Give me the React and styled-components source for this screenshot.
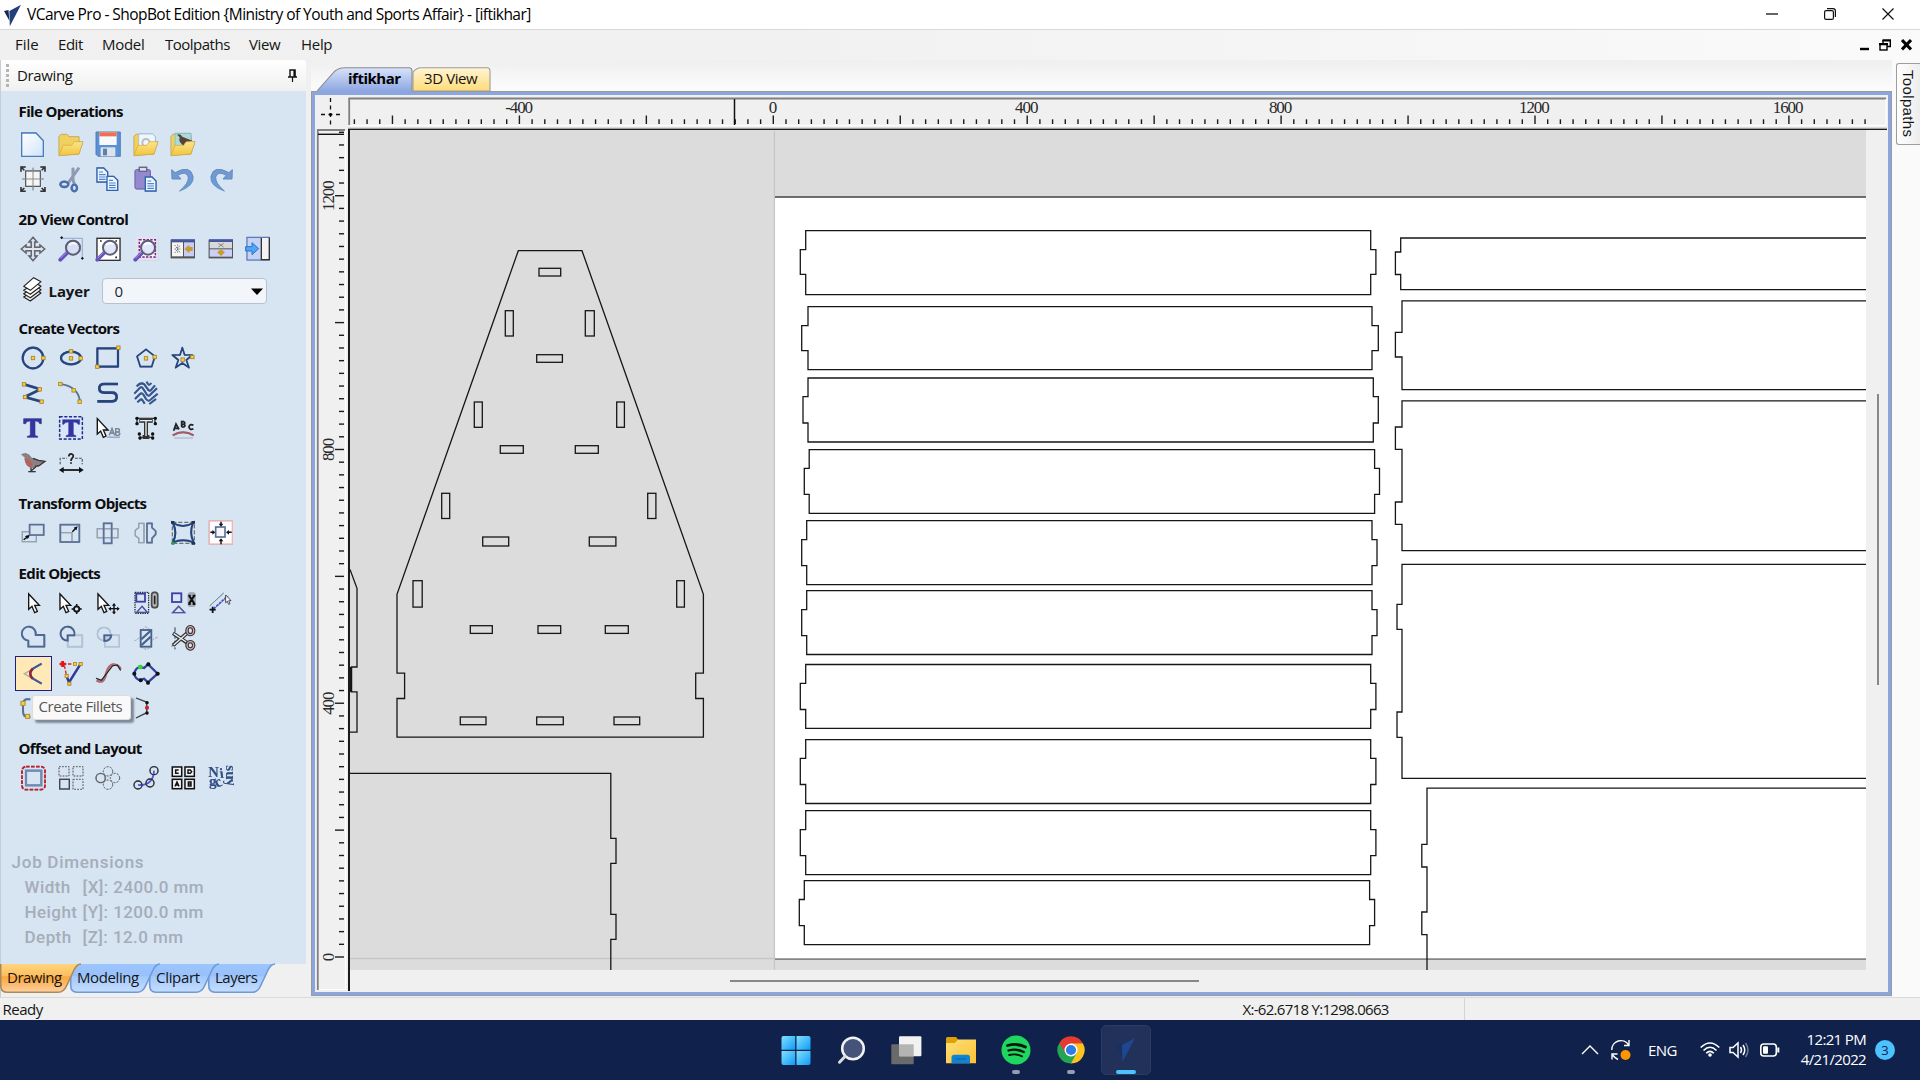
import React from 'react';
import styled, { createGlobalStyle } from 'styled-components';

const ui = '"Open Sans", "Noto Sans", sans-serif';

const Global = createGlobalStyle`
  * { box-sizing: border-box; }
  html, body { margin: 0; padding: 0; }
  body { width: 1920px; height: 1080px; overflow: hidden; font-family: ${ui}; color: #111; }
  svg { display: block; }
`;

const Desktop = styled.div`
  width: 1920px; height: 1080px; display: flex; flex-direction: column; background: #f0f0f0;
`;
const Text = styled.span`
  font-family: ${ui};
  font-size: ${p => p.$size || 15}px;
  font-weight: ${p => p.$weight || 400};
  letter-spacing: ${p => p.$ls || 0}px;
  color: ${p => p.$color || '#151515'};
  white-space: pre;
  line-height: 1;
`;

/* ---------- window chrome ---------- */
const TitleBar = styled.header`
  height: 30px; background: #fff; border-bottom: 1px solid #d9d9d9;
  display: flex; align-items: center; padding: 0 26px 0 4px;
`;
const AppLogo = styled.svg`width: 17px; height: 24px; margin-right: 6px;`;
const Spacer = styled.div`flex: 1;`;
const WindowButtons = styled.div`display: flex; gap: 46px; align-items: center; padding-bottom: 1px;`;
const MenuBar = styled.nav`
  height: 30px; display: flex; align-items: center; padding: 0 8px 1px 15px;
  background: linear-gradient(90deg, #f0f0f0, #f1f1f1 40%, #fafafa);
`;
const MenuItem = styled(Text)`width: ${p => p.$w}px;`;
const MdiButtons = styled.div`display: flex; gap: 10px; align-items: center;`;

const Body = styled.main`height: 937px; display: flex; border-left: 1px solid #c3ced9;`;

/* ---------- left panel ---------- */
const Side = styled.aside`width: 305px; display: flex; flex-direction: column;`;
const PanelHeader = styled.div`
  height: 31px; display: flex; align-items: center; padding: 0 9px 0 5px;
  background: linear-gradient(#fff, #f0f0f0); border-radius: 0 3px 0 0;
`;
const Pin = styled.svg`width: 9px; height: 13px; margin-bottom: 1px;`;
const Grip = styled.div`
  width: 3px; height: 24px; margin-right: 8px;
  background: repeating-linear-gradient(#b5b5b5 0 3px, transparent 3px 5px);
`;
const ToolPanel = styled.div`
  height: 873px; background: #d7e4f2; display: flex; flex-direction: column; padding-left: 13.6px;
`;
const Section = styled.section`margin-top: ${p => p.$top}px;`;
const Heading = styled.h3`
  margin: 0 0 ${p => p.$gap || 1.5}px 4px; height: 20px; line-height: 18px;
  font-size: 15px; font-weight: 700; letter-spacing: -0.66px; color: #0c0c0c; white-space: nowrap;
`;
const ToolRow = styled.div`display: flex; height: 35px; position: relative;`;
const Tool = styled.button`
  width: 37.5px; height: 35px; padding: 0; display: flex; align-items: center; justify-content: center;
  background: ${p => (p.$on ? '#ffe9b6' : 'transparent')};
  border: ${p => (p.$on ? '1.4px solid #1d1d8c' : '0')};
`;
const Glyph = styled.svg`
  width: 26px; height: 26px; overflow: visible; flex: none;
  filter: drop-shadow(.7px .9px .7px rgba(60, 80, 110, .4));
`;
const LayerRow = styled.div`margin-top: 11.5px; height: 26px; display: flex; align-items: center;`;
const LayerIcon = styled.svg`width: 26px; height: 26px; margin: -4px 0 0 5px; overflow: visible;`;
const LayerName = styled(Text)`width: 53px; margin-left: 3px;`;
const Select = styled.div`
  width: 165px; height: 26px; border: 1px solid #b7c2ce; border-radius: 4px; background: #f2f6fb;
  display: flex; align-items: center; justify-content: space-between; padding: 0 3px 0 12px;
`;
const Tooltip = styled.div`
  position: absolute; left: 17px; top: 4px; width: 99px; height: 25px; border-radius: 3px;
  border: 1px solid #dcdcdc; background: #f9f9f9; box-shadow: 3px 3px 2px rgba(70, 80, 95, .6);
  display: flex; align-items: center; padding: 0 0 1px 6px;
`;
const JobInfo = styled.div`
  margin-top: auto; padding: 0 0 14px; display: flex; flex-direction: column; margin-left: -3px;
`;
const JobLine = styled.div`
  padding-left: ${p => (p.$in ? 13 : 0)}px; height: 25px;
  font: 500 17px/25px Roboto, sans-serif; letter-spacing: ${p => p.$ls}px; color: #a4adb8; white-space: pre;
`;
const JobKey = styled.span`display: inline-block; width: 58px;`;
const BottomTabs = styled.div`display: flex; height: 33px; margin-left: -1px;`;
const BottomTab = styled.div`
  position: relative; z-index: ${p => p.$z}; width: ${p => p.$w}px; height: 29px;
  padding: 6px 0 0 7px; display: flex; align-items: flex-start;
`;
const TabShape = styled.svg`
  position: absolute; left: 0; top: 0; z-index: -1; overflow: visible; width: 100%; height: 29px;
`;

/* ---------- document area ---------- */
const Docs = styled.section`width: 1581px; margin-left: 5px; display: flex; flex-direction: column;`;
const DocTabs = styled.div`
  height: 31px; display: flex; align-items: flex-end; padding-left: 6px;
  background: linear-gradient(#efefef, #fcfcfc);
`;
const DocTab = styled.div`
  position: relative; z-index: 0; width: ${p => p.$w}px; height: 24px;
  padding: 4px 0 0 ${p => p.$pl}px; display: flex; align-items: flex-start;
`;
const Frame = styled.div`
  height: 905px; border: 4px solid #8aa5e0; outline: 1px solid #9a9a9a; outline-offset: -1px;
  background: #f0f0f0; display: grid; padding: 1px 0 0;
  grid-template-columns: 33px 1539px; grid-template-rows: 33px 862px;
`;
const Pane = styled.svg`width: ${p => p.$w}px; height: ${p => p.$h}px;`;
const CanvasWrap = styled.div`
  border-left: 2px solid #1a1a1a; border-top: 1.5px solid #1a1a1a;
  display: grid; grid-template-columns: 1516px 21px; grid-template-rows: 840px 20px;
`;
const ScrollY = styled.div`
  padding-left: 10.5px; padding-top: 264px;
  &::after { content: ''; display: block; width: 2px; height: 291px; background: #888; }
`;
const ScrollX = styled.div`
  grid-column: 1 / 3; padding: 10px 0 0 380px;
  &::after { content: ''; display: block; width: 469px; height: 2px; background: #888; }
`;

const RightDock = styled.aside`flex: 1; background: #fafafa; padding: 3px 0 0 4px;`;
const DockTab = styled.div`
  width: 24px; height: 82px; border: 1px solid #9d9d9d; border-right: 0; border-radius: 3px 0 0 3px;
  background: linear-gradient(90deg, #fff, #ededed);
  writing-mode: vertical-rl; display: flex; align-items: center; padding: 6px 1px 0 0;
`;
const DockLabel = styled(Text)`font-family: "Liberation Sans", Arial, sans-serif;`;

const StatusBar = styled.footer`
  height: 23px; border-top: 1px solid #dadada; background: #f0f0f0; display: flex; align-items: center; padding-left: 2.5px;
`;
const StatusReady = styled(Text)`width: 1240px;`;
const Coords = styled.div`
  width: 222px; height: 22px; display: flex; align-items: center; border-right: 1px solid #d4d4d4;
`;

/* ---------- taskbar ---------- */
const Taskbar = styled.div`
  height: 60px; background: #10224c; display: flex; align-items: center;
`;
const Apps = styled.div`display: flex; gap: 5px; margin-left: 771px;`;
const AppButton = styled.div`
  width: 50px; height: 50px; border-radius: 5px; display: flex; flex-direction: column; align-items: center;
  justify-content: flex-end;
  background: ${p => (p.$active ? '#21315a' : 'transparent')};
  border: 1px solid ${p => (p.$active ? '#2b3b62' : 'transparent')};
`;
const AppIcon = styled.svg`width: 32px; height: 32px; overflow: visible; margin-bottom: -1.5px;`;
const Running = styled.i`
  width: ${p => p.$w}px; height: 4px; border-radius: 2px; background: ${p => p.$c};
`;
const Tray = styled.div`margin-left: auto; display: flex; align-items: center; padding-right: 25px; height: 60px;`;
const TrayIcon = styled.svg`width: ${p => p.$w}px; height: 24px; margin-right: ${p => p.$mr}px; overflow: visible;`;
const Clock = styled.div`display: flex; flex-direction: column; align-items: flex-end; gap: 5px; width: 80px; margin-right: 9px; padding-bottom: 1.5px;`;
const Lang = styled(Text)`width: 52px;`;
const Badge = styled.div`
  width: 20px; height: 20px; border-radius: 50%; background: #4cc2ff; display: flex; align-items: center; justify-content: center;
`;

/* ---------- toolbar drawings: origin is the centre of a 78-unit square ---------- */
const B = '#26457f';
const Node = ({ x, y, r = 5 }) => (
  <rect x={x - r} y={y - r} width={r * 2} height={r * 2} fill="#f6cf45" stroke="#b58a1c" strokeWidth="2.4" />
);
const Dot = ({ x, y, c = '#111', r = 5 }) => <circle cx={x} cy={y} r={r} fill={c} />;
const Arrow = ({ x = 0, y = 0, s = 1 }) => (
  <path transform={`translate(${x} ${y}) scale(${s})`} d="M0 0V46L10 37L18 56L26 52L18 34H32Z" fill="#fff" stroke="#161616" strokeWidth="4" />
);
const Lens = () => (
  <g>
    <path d="M-8 8L-32 32" stroke="#6a4fc0" strokeWidth="11" strokeLinecap="round" />
    <path d="M-10 6L-32 28" stroke="#a99ae6" strokeWidth="3" />
    <circle cx="6" cy="-4" r="21" fill="#dfe6fa" fillOpacity=".9" stroke="#5d5d78" strokeWidth="6" />
    <path d="M-6 -12Q4 -22 16 -14" stroke="#fff" strokeWidth="5" fill="none" />
  </g>
);
const Folder = ({ children }) => (
  <g>
    <path d="M-36 32V-22L-30 -29H-12L-6 -22H24V30Z" fill="#f0d05e" stroke="#cda83f" strokeWidth="2" />
    {children}
    <path d="M-36 35L-24 4H2L10 -7H36L24 30Z" fill="url(#gold)" stroke="#d6a632" strokeWidth="2" />
  </g>
);
const Doc = ({ x, y }) => (
  <g transform={`translate(${x} ${y})`}>
    <path d="M0 0H20L32 12V42H0Z" fill="#eef5ff" stroke="#2f62ac" strokeWidth="4" />
    <path d="M6 12H18M6 20H26M6 27H26M6 34H26" stroke="#4c86d0" strokeWidth="3.4" />
  </g>
);
const N = { fill: 'none', stroke: B, strokeWidth: 6.5, strokeLinejoin: 'round' };

const icons = {
  newFile: <path d="M-34 -33H9L31 -10V37H-34Z" fill="url(#page)" stroke="#4a7cc0" strokeWidth="4" />,
  open: <Folder />,
  save: (
    <g>
      <path d="M-36 -36H37V37H-30L-36 31Z" fill="#5b90d4" stroke="#4474b5" strokeWidth="2" />
      <rect x="-26" y="-35" width="52" height="38" fill="#f6f8fb" />
      <rect x="-26" y="-35" width="52" height="12" fill="#ee6f55" />
      <rect x="-22" y="10" width="44" height="27" fill="#dbe3ec" />
      <rect x="-15" y="14" width="12" height="20" fill="#5f7fa5" />
    </g>
  ),
  importV: <Folder><path d="M-22 -30H20L28 -22V14H-22Z" fill="#eef6ff" stroke="#8fb4d6" strokeWidth="2" /><circle cx="0" cy="-4" r="11" fill="none" stroke="#bdbdbd" strokeWidth="6" /></Folder>,
  importB: <Folder><path d="M-24 -32H24V10H-24Z" fill="#a9dcd8" stroke="#7fb5b5" strokeWidth="2" /><path d="M-18 -28Q-8 -32 -2 -22L28 -10L6 -4L2 8L-4 0Q-14 -8 -10 -20Z" fill="#5b4238" /></Folder>,
  job: (
    <g fill="none" stroke="#333">
      <rect x="-22" y="-24" width="44" height="46" fill="#f5f5f5" stroke="#555" strokeWidth="3.6" />
      <path d="M0 -34V34M-32 0H32" stroke="#8b8b8b" strokeWidth="3" />
      <path d="M-36 -22V-36H-22M-36 -36L-26 -26M22 -36H36V-22M36 -36L26 -26M36 24V37H22M36 37L26 27M-22 37H-36V24M-36 37L-26 27" strokeWidth="4.4" />
    </g>
  ),
  cut: (
    <g fill="none">
      <path d="M24 -34L-10 14M6 -34L6 4L10 14" stroke="#8f99b3" strokeWidth="8" />
      <ellipse cx="-20" cy="16" rx="12" ry="8" stroke="#4b6fae" strokeWidth="7" />
      <ellipse cx="10" cy="27" rx="8" ry="10" stroke="#4b6fae" strokeWidth="7" />
    </g>
  ),
  copy: <g><Doc x={-33} y={-33} /><Doc x={-3} y={-8} /></g>,
  paste: <g><rect x="-33" y="-28" width="46" height="58" rx="5" fill="#9488cf" stroke="#6c62ad" strokeWidth="3" /><rect x="-20" y="-35" width="22" height="12" fill="#dcdcea" stroke="#66668c" strokeWidth="4" /><Doc x={-2} y={-6} /></g>,
  undo: <path d="M-34 -28L-33 0H-6L-16 -11Q10 -26 16 -6Q18 12 -10 36Q34 20 30 -8Q22 -44 -24 -19Z" fill="url(#curl)" stroke="#5b82bc" strokeWidth="2" />,
  redo: <path d="M34 -28L33 0H6L16 -11Q-10 -26 -16 -6Q-18 12 10 36Q-34 20 -30 -8Q-22 -44 24 -19Z" fill="url(#curl)" stroke="#5b82bc" strokeWidth="2" />,

  pan: <path d="M0 -35L12 -21H5V-5H21V-12L35 0L21 12V5H5V21H12L0 35L-12 21H-5V5H-21V12L-35 0L-21 -12V-5H-5V-21H-12Z" fill="#e4e4ec" stroke="#666673" strokeWidth="4.4" />,
  zoom: <g><path d="M-28 -32H34V26" fill="none" stroke="#8ea6d6" strokeWidth="2" /><path d="M-32 -34h8M-28 -38v8M30 28h8M34 24v8" stroke="#111" strokeWidth="3" /><Lens /></g>,
  zoomFit: <g><rect x="-33" y="-32" width="69" height="66" fill="#fff" stroke="#333" strokeWidth="4" /><path d="M-24 -24h5M22 -24h5M22 25h5" stroke="#222" strokeWidth="5" /><Lens /></g>,
  zoomSel: <g><rect x="-33" y="-36" width="70" height="70" fill="#eef0f8" opacity=".8" /><rect x="-20" y="-28" width="48" height="52" fill="#fbf7fd" stroke="#8b178b" strokeWidth="4.5" strokeDasharray="7 4" /><Lens /></g>,
  tileH: <g><rect x="-37" y="-28" width="73" height="56" fill="#555" /><path d="M-36 -26H36" stroke="#3f58bd" strokeWidth="6" /><rect x="-33" y="-20" width="33" height="42" fill="#f5f5f5" /><rect x="3" y="-20" width="30" height="42" fill="#c7cdf8" /><path d="M4 0L19 -13V-6H29V6H19V13Z" fill="#c79c2a" /><path d="M-25 -12L-8 12M-25 12L-8 -12M-25 0H-8M-16 -14V14" stroke="#777" strokeWidth="3" strokeDasharray="4 3" /></g>,
  tileV: <g><rect x="-37" y="-28" width="73" height="56" fill="#555" /><path d="M-36 -26H36" stroke="#3f58bd" strokeWidth="6" /><rect x="-34" y="-21" width="67" height="19" fill="#d9d9d9" /><rect x="-34" y="1" width="67" height="22" fill="#cbd0f8" /><path d="M-12 10L0 21L12 10L0 1Z" fill="#c79c2a" /><path d="M-8 -17L8 -6M-8 -6L8 -17" stroke="#888" strokeWidth="3" /></g>,
  dock: <g><rect x="-33" y="-35" width="67" height="68" fill="#c4d2f5" stroke="#4b6eb0" strokeWidth="3" /><rect x="12" y="-33" width="20" height="63" fill="#f3f3f3" /><path d="M10 -33V32H34V-34" stroke="#333" strokeWidth="4" fill="none" /><path d="M-37 -7H-18V-19L2 -1L-18 17V6H-37Z" fill="#4fa6f5" stroke="#2a74c8" strokeWidth="3" /></g>,

  circle: <g><circle r="31" {...N} /><Node x={0} y={0} /><Node x={31} y={0} /></g>,
  ellipse: <g><ellipse rx="30" ry="19" {...N} /><Node x={0} y={-20} /><Node x={0} y={1} /><Node x={29} y={1} /></g>,
  rect: <g><rect x="-32" y="-29" width="62" height="55" {...N} /><Node x={31} y={-31} /><Node x={-32} y={26} /></g>,
  poly: <g><path d="M0 -26L27 -5L17 26H-17L-27 -5Z" {...N} strokeWidth="5" /><Node x={0} y={1} /><Node x={26} y={-3} /></g>,
  star: <g><path d="M-2 -31L5 -9H28L10 6L18 29L-2 15L-22 29L-14 6L-32 -9H-9Z" {...N} strokeWidth="5" /><Node x={-1} y={5} /><Node x={28} y={-3} /></g>,
  polyline: <g><path d="M-27 -26L22 -11L-25 12L27 26" {...N} strokeWidth="8" /><Node x={-27} y={-26} /><Node x={20} y={-11} /><Node x={-24} y={12} /><Node x={26} y={26} /></g>,
  arc: <g><path d="M-32 -27Q22 -20 27 26" {...N} stroke="#5c7396" strokeWidth="5" /><Node x={-32} y={-27} /><Node x={8} y={-8} /><Node x={26} y={26} /></g>,
  curve: <path d="M30 -27H-12Q-26 -27 -26 -14Q-26 -1 -12 -1H12Q26 -1 26 12Q26 25 12 25H-32" {...N} strokeWidth="8" />,
  texture: (
    <g {...N} strokeWidth="6" stroke="#36558f">
      <path d="M-35 2L-20 -14Q-13 -21 -8 -12L2 4Q8 12 14 4L33 -14M-33 18L-18 3Q-12 -2 -7 6L0 18Q8 28 16 18L35 2M-26 28L-17 20Q-13 17 -9 24L-4 32M-28 -20Q-16 -34 -5 -26L8 -8Q12 -4 16 -10L27 -23M2 -34Q8 -18 16 -30M10 33L30 18" />
    </g>
  ),
  text: <path d="M-28 -28H25V-13H20Q18 -22 6 -21V20Q6 24 14 25V28H-17V25Q-8 24 -8 20V-21Q-20 -22 -22 -13H-28Z" fill="#3535a0" stroke="#3535a0" strokeWidth="1.5" />,
  textBox: <g><rect x="-34" y="-34" width="68" height="67" fill="#dce6fb" stroke="#1f2f8c" strokeWidth="4.4" strokeDasharray="9 5" /><path d="M-25 -25H26V-11H21Q18 -18 7 -18V18Q7 22 15 23V26H-15V23Q-7 22 -7 18V-18Q-18 -18 -21 -11H-25Z" fill="#3535a0" stroke="#3535a0" strokeWidth="1.5" /></g>,
  textEdit: <g><Arrow x={-32} y={-28} /><g fill="none" stroke="#7d8797" strokeWidth="4"><path d="M4 22L12 2L20 22M7 15H17M23 22V2H31Q38 6 31 12H23M31 12Q40 18 31 22H23" /></g><path d="M-2 28H36" stroke="#9aaccb" strokeWidth="4" /></g>,
  textNode: <g><path d="M-27 -29H27M-27 -29V-14M27 -29V-14M-18 28H18" stroke="#444" strokeWidth="4" fill="none" /><path d="M-20 -22H20M0 -22V24M-10 27H10" stroke="#333" strokeWidth="12" /><path d="M-18 -22H18M0 -22V24" stroke="#eee" strokeWidth="4" /><Dot x={-27} y={-29} /><Dot x={28} y={-29} /><Dot x={-27} y={-13} /><Dot x={28} y={-13} /><Dot x={-18} y={30} /><Dot x={20} y={30} /><Dot x={-20} y={18} /><Dot x={20} y={18} /></g>,
  textArc: <g><g fill="none" stroke="#222" strokeWidth="5"><path d="M-28 8L-21 -12L-12 4M-26 1H-15M-4 -3V-19H2Q9 -15 2 -11H-4M2 -11Q10 -7 2 -3H-4M31 -8Q20 -14 18 -3Q20 8 31 2" /></g><path d="M-31 22Q0 4 32 22" fill="none" stroke="#a65a64" strokeWidth="6" /><path d="M-26 30H30" stroke="#c3c9d4" strokeWidth="3" /></g>,
  bird: <g><path d="M-36 -26L-22 -30Q-10 -26 -4 -16L36 -4L18 10Q2 18 -8 14Q-26 6 -24 -16Z" fill="#8d8080" /><path d="M-26 -14Q-22 10 -6 13Q2 4 -10 -10Z" fill="#b9605a" /><path d="M-6 14L-6 26M-14 26H8M8 12L-6 24M0 -14L16 -8L36 -5L18 8L6 10" stroke="#3e3435" strokeWidth="3.6" fill="none" /></g>,
  measure: <g fill="none"><path d="M-32 4V-14H-12M12 -14H34V4" stroke="#777" strokeWidth="4" strokeDasharray="8 4" /><path d="M-7 -20Q-5 -28 2 -27Q11 -23 4 -15Q0 -12 0 -6M0 -2V2" stroke="#222" strokeWidth="5" /><path d="M-26 21H28" stroke="#111" strokeWidth="5" /><path d="M-36 21L-22 12V30ZM38 21L24 12V30Z" fill="#111" /></g>,

  move: <g fill="none"><rect x="-32" y="-4" width="42" height="30" stroke="#98a2af" strokeWidth="3.6" /><rect x="-10" y="-25" width="42" height="31" stroke="#5b7096" strokeWidth="5" fill="#d7e2f0" /><path d="M-28 20L-12 8" stroke="#111" strokeWidth="4" /><path d="M-12 8L-22 10L-16 16Z" fill="#111" stroke="#111" strokeWidth="3" /></g>,
  size: <g fill="none"><path d="M-32 -1H3V25" stroke="#98a2af" strokeWidth="3.6" /><rect x="-32" y="-25" width="57" height="52" stroke="#5b7096" strokeWidth="5" /><path d="M4 -4L16 -16" stroke="#111" strokeWidth="4" /><path d="M20 -20L8 -16L16 -8Z" fill="#111" /></g>,
  rotate: <g fill="none"><rect x="-32" y="-13" width="62" height="27" stroke="#98a2af" strokeWidth="4" /><rect x="-13" y="-29" width="24" height="60" stroke="#5b7096" strokeWidth="5" /></g>,
  mirror: <g fill="none" strokeLinejoin="round"><path d="M-6 -29V29H-22V16L-32 8V-8L-22 -16V-29Z" stroke="#98a2af" strokeWidth="4" /><path d="M3 -29V29H18V16L29 4V-6L18 -16V-29Z" stroke="#5b7096" strokeWidth="5" /></g>,
  distort: <g fill="none"><rect x="-32" y="-32" width="66" height="63" stroke="#666" strokeWidth="3" strokeDasharray="12 6" /><path d="M-30 -30Q0 -12 30 -30Q18 0 32 28Q0 16 -30 28Q-16 0 -30 -30Z" stroke="#23477d" strokeWidth="6" /><path d="M-36 -32h10M26 -32h10M26 31h10" stroke="#23344a" strokeWidth="8" /><Dot x={-30} y={31} c="#2aa043" /></g>,
  align: <g fill="none"><rect x="-35" y="-36" width="69" height="69" fill="#fff" stroke="#f3b5b5" strokeWidth="4" /><rect x="-16" y="-18" width="28" height="30" stroke="#5b7096" strokeWidth="5" fill="#f5f7fb" /><path d="M0 -34V-24M0 34V22M-32 -2H-22M32 -2H20" stroke="#111" strokeWidth="4.4" /><path d="M-7 -28L0 -19L7 -28ZM-7 25L0 16L7 25ZM-26 -9L-17 -2L-26 5ZM24 -9L15 -2L24 5Z" fill="#111" /></g>,

  select: <Arrow x={-13} y={-27} />,
  nodeEdit: <g><Arrow x={-33} y={-27} /><circle cx="17" cy="18" r="8" fill="none" stroke="#111" strokeWidth="5" /><path d="M17 3V12M17 24V33M2 18H11M23 18H32" stroke="#111" strokeWidth="4.4" /></g>,
  transform: <g><Arrow x={-30} y={-27} /><path d="M18 3V31M4 17H32" stroke="#111" strokeWidth="4" /><path d="M12 8L18 0L24 8ZM12 26L18 34L24 26ZM9 11L1 17L9 23ZM27 11L35 17L27 23Z" fill="#111" /></g>,
  group: <g fill="none"><rect x="-33" y="-32" width="41" height="63" stroke="#111" strokeWidth="3" strokeDasharray="4 3" /><rect x="-29" y="-28" width="26" height="24" stroke="#3d3da8" strokeWidth="5" /><path d="M-12 10L-28 28H4Z" stroke="#5050a8" strokeWidth="4" /><rect x="17" y="-32" width="18" height="46" rx="8" stroke="#4b4b4b" strokeWidth="5" fill="#bbb" /><path d="M26 -22V4" stroke="#222" strokeWidth="5" /></g>,
  ungroup: <g fill="none"><rect x="-33" y="-29" width="28" height="26" stroke="#3d3da8" strokeWidth="5" /><path d="M-13 10L-31 29H5Z" stroke="#5050a8" strokeWidth="4" /><rect x="14" y="-32" width="24" height="44" rx="9" fill="#a3adb6" /><path d="M18 -22L34 2M34 -22L18 2M16 -22H23M29 -22H37M16 3H23M29 3H37" stroke="#111" strokeWidth="6" /></g>,
  measureEdit: <g fill="none"><path d="M-34 9L8 -30M-24 20L22 -20" stroke="#7d8797" strokeWidth="3" /><path d="M-22 17L18 -20" stroke="#3b49e0" strokeWidth="4" strokeDasharray="7 4" /><path d="M-34 20H-16M-25 11V30" stroke="#111" strokeWidth="5" /><Arrow x={14} y={-24} s={0.5} /></g>,
  weld: <path d="M-14 8A21 21 0 1 1 8 -9H34V26H-14Z" {...N} stroke="#4f6793" strokeWidth="5.5" />,
  subtract: <g fill="none"><rect x="-10" y="-8" width="44" height="34" stroke="#b4c2d6" strokeWidth="4.5" /><path d="M-10 8A21 21 0 1 1 10 -8H-10Z" stroke="#47628f" strokeWidth="5.5" /></g>,
  overlap: <g fill="none"><rect x="-10" y="-8" width="44" height="34" stroke="#b4c2d6" strokeWidth="4" /><circle cx="-12" cy="-12" r="20" stroke="#b4c2d6" strokeWidth="4" /><path d="M-11 -8H10Q8 8 -11 9Z" stroke="#47628f" strokeWidth="5.5" fill="#c3cfdf" /></g>,
  slice: <g fill="none"><path d="M-34 8Q-26 6 -20 -2M34 -2Q22 2 16 10M-10 -26L-2 -34L14 -24M-14 28L0 34L16 28" stroke="#a7b3c5" strokeWidth="3" strokeDasharray="6 4" /><rect x="-16" y="-24" width="32" height="50" stroke="#47628f" strokeWidth="5" /><path d="M-14 4L14 -22M-14 22L14 -4" stroke="#47628f" strokeWidth="6" /></g>,
  trim: <g fill="none"><path d="M-24 -32V34M-34 24L-20 20" stroke="#4b5a6d" strokeWidth="3" strokeDasharray="14 6" /><path d="M-30 -14L12 14M-30 22L14 -16" stroke="#333" strokeWidth="11" /><path d="M-28 -13L10 12M-28 21L12 -14" stroke="#eee" strokeWidth="4" /><ellipse cx="22" cy="-22" rx="10" ry="12" stroke="#333" strokeWidth="10" /><ellipse cx="22" cy="-22" rx="10" ry="12" stroke="#d8a9ad" strokeWidth="4" /><ellipse cx="22" cy="22" rx="10" ry="11" stroke="#333" strokeWidth="10" /><ellipse cx="22" cy="22" rx="10" ry="11" stroke="#d8a9ad" strokeWidth="4" /></g>,
  fillet: <g fill="none"><path d="M26 -27L-26 2L26 32" stroke="#b5b0a4" strokeWidth="3.5" /><path d="M26 -28L0 -13Q-16 2 0 17L26 32" stroke="#3d5c9a" strokeWidth="6" /><path d="M-1 -13Q-16 2 -1 17" stroke="#9b2130" strokeWidth="7" /></g>,
  extend: <g fill="none"><path d="M-24 -27L8 -27M-20 -22L-12 14" stroke="#e0342d" strokeWidth="4" strokeDasharray="10 5" /><path d="M28 -26L-6 28L-13 10" stroke="#30389c" strokeWidth="7" /><path d="M-34 -27H-16M-25 -36V-18" stroke="#e11" strokeWidth="8" /><Node x={12} y={-27} r={4.5} /><Node x={29} y={-27} r={4.5} /><Node x={-13} y={9} r={4.5} /><Node x={-5} y={32} r={4.5} /></g>,
  smooth: <g fill="none"><path d="M-34 22Q-16 34 -8 10Q2 -30 20 -25Q32 -24 38 -12" stroke="#b46a70" strokeWidth="7" /><path d="M-36 16L-20 22L14 -22L28 -24L38 -8" stroke="#222" strokeWidth="3.4" /></g>,
  closeV: <g fill="none"><path d="M-17 -18L-6 -15L6 -26L35 2L6 28L-6 17L-16 21Q-32 20 -35 2Q-32 -16 -17 -18Z" stroke="#3141a0" strokeWidth="6.5" /><Dot x={7} y={-26} r={6} /><Dot x={35} y={2} r={6} /><Dot x={6} y={29} r={6} /><Dot x={-16} y={22} r={6} /><Dot x={-35} y={2} r={6} /><Dot x={-17} y={-18} c="#2ddc2d" r={7} /></g>,
  joinA: <g fill="none"><path d="M-8 -26H-20Q-30 -24 -30 -8V8Q-30 24 -20 26H-8" stroke="#5b7096" strokeWidth="6" /><Node x={-30} y={-14} r={6} /><Node x={-16} y={25} r={6} /></g>,
  nodesR: <g fill="none"><path d="M-30 -30L4 -17M-30 30L4 13M2 -17V14" stroke="#444" strokeWidth="4" /><Dot x={3} y={-16} /><Dot x={3} y={-1} c="#d0202c" r={6} /><Dot x={3} y={15} /></g>,

  offset: <g fill="none"><rect x="-33" y="-34" width="69" height="69" rx="12" stroke="#c21f2b" strokeWidth="5.5" strokeDasharray="11 4" /><rect x="-21" y="-22" width="46" height="44" stroke="#6f89b5" strokeWidth="6.5" /></g>,
  array: <g fill="none" stroke="#666" strokeWidth="3"><path d="M-36 -34H-6V-6H-36ZM6 -34H36V-6H6ZM6 4H36V34H6Z" strokeDasharray="5 4" /><rect x="-34" y="4" width="29" height="29" stroke="#445" strokeWidth="4" /></g>,
  radial: <g fill="none" stroke="#666" strokeWidth="3"><circle cx="0" cy="-20" r="14" strokeDasharray="6 4" /><circle cx="21" cy="0" r="14" strokeDasharray="6 4" /><circle cx="0" cy="20" r="14" strokeDasharray="6 4" /><circle cx="-22" cy="0" r="14" strokeWidth="4" /></g>,
  along: <g fill="none"><path d="M-24 21Q22 24 24 -22" stroke="#5055e8" strokeWidth="5" /><g stroke="#333" strokeWidth="4"><circle cx="24" cy="-22" r="12" /><circle cx="12" cy="15" r="12" /><circle cx="-24" cy="21" r="12" /></g></g>,
  nest: <g fill="#f4f4f4" stroke="#111" strokeWidth="4.4"><rect x="-32" y="-33" width="28" height="28" /><rect x="6" y="-33" width="28" height="28" /><rect x="-32" y="4" width="28" height="28" /><rect x="6" y="4" width="28" height="28" /><path d="M-13 -24H-22V-14H-13M15 -24H22L26 -19L22 -14H15ZM-24 25L-18 12L-12 25M-22 21H-14M16 24V12H24V24ZM16 18H24" fill="none" /></g>,
};
const word = ([t, x, y, s, r]) => (
  <text key={t} transform={`translate(${x} ${y}) rotate(${r})`} fontSize={s} fontFamily="Liberation Serif, serif" fontWeight="700" fill="#2f4f88">{t}</text>
);
icons.nesting = (
  <g>
    {[['N', -38, -3, 44, 0], ['i', -2, 0, 42, -8], ['su', 14, -38, 46, 90], ['g', -36, 24, 46, 0], ['c', -12, 30, 46, -25], ['y', 14, 6, 44, 75]].map(word)}
  </g>
);

const Ico = ({ n }) => <Glyph viewBox="-39 -39 78 78">{icons[n]}</Glyph>;
const Tools = ({ rows }) => rows.map((row, i) => (
  <ToolRow key={i}>
    {row.map((n, j) => (n ? <Tool key={j} $on={n === 'fillet'}><Ico n={n} /></Tool> : <Tool key={j} />))}
    {row[0] === 'joinA' && <Tooltip><Text $size={15} $ls={-0.45} $color="#575757">Create Fillets</Text></Tooltip>}
  </ToolRow>
));

/* ---------- rulers and drawing ---------- */
const range = (a, b) => Array.from({ length: b - a + 1 }, (_, i) => a + i);

const TopRuler = () => (
  <Pane $w={1539} $h={33} viewBox="348 96 1539 33">
    <path d="M348.5 98.5H1886" stroke="#808080" strokeWidth="1.8" />
    <path d="M349.2 98V125" stroke="#808080" strokeWidth="1.8" />
    <path d="M350 125.5H1886V99" stroke="#fff" fill="none" />
    <path d="M348 128.3H1888" stroke="#8c8c8c" />
    {range(-33, 86).map(i => {
      const x = 773.3 + i * 12.695;
      return <path key={i} d={`M${x} ${i % 10 ? 119.3 : 115.5}V124`} stroke="#1c1c1c" strokeWidth="1.4" />;
    })}
    {[-400, 0, 400, 800, 1200, 1600].map(v => (
      <text key={v} x={772.4 + v * 0.6345} y="112.8" textAnchor="middle" fontFamily="Liberation Serif, serif" fontSize="17" letterSpacing="-1.1" fill="#2a2a2a">{v}</text>
    ))}
    <path d="M734.5 99V125" stroke="#111" strokeWidth="1.5" />
  </Pane>
);
const SideRuler = () => (
  <Pane $w={33} $h={862} viewBox="315 129 33 862">
    <path d="M317.8 990V130H345" stroke="#808080" strokeWidth="1.8" fill="none" />
    <path d="M319 989.5H345.5V130" stroke="#fff" fill="none" />
    {range(0, 65).map(i => {
      const y = 957 - i * 12.688;
      return <path key={i} d={`M${i % 10 ? 339 : 335} ${y}H344`} stroke="#1c1c1c" strokeWidth="1.4" />;
    })}
    <path d="M318 134.3H344" stroke="#111" strokeWidth="1.4" />
    {[0, 400, 800, 1200].map(v => (
      <text key={v} transform={`translate(333.6 ${957.5 - v * 0.6344}) rotate(-90)`} textAnchor="middle" fontFamily="Liberation Serif, serif" fontSize="17" letterSpacing="-1.1" fill="#2a2a2a">{v}</text>
    ))}
  </Pane>
);

// [left, tab left, right, tab right, top, tab top, tab bottom, bottom]
const planks = [
  [805.7, 800.3, 1370.7, 1375.9, 230.7, 249.7, 274.3, 294.7],
  [808.0, 801.7, 1372, 1378.3, 306.7, 325.7, 350.7, 369.7],
  [808.0, 803.0, 1373.3, 1378.3, 378, 396.7, 423, 442],
  [809.2, 804.3, 1374.6, 1379.5, 449.7, 468.3, 494.3, 513.3],
  [806.7, 801.7, 1372, 1377, 520.7, 539.7, 565.7, 584.7],
  [806.7, 801.7, 1372, 1377, 590.7, 609.7, 635.7, 654.5],
  [805.7, 800.3, 1370.7, 1375.9, 664.5, 683.3, 709.5, 728.3],
  [805.7, 800.3, 1370.7, 1375.9, 739.7, 758.4, 784.5, 803.5],
  [805.7, 800.3, 1370.7, 1375.9, 810.7, 829.7, 855.7, 874.7],
  [804.3, 799.3, 1369.6, 1374.6, 880.7, 899.5, 925.7, 944.7],
];
// [left, top, width, height]
const slots = [
  [539, 268.3, 21.7, 7.7], [505.3, 310.7, 8, 25.3], [585.3, 310.7, 9, 25.3], [536.7, 354.7, 25.7, 7.6],
  [474.3, 402, 8, 25.3], [616.7, 402, 7.7, 25.3], [500.3, 445.7, 23, 7.6], [575.3, 445.7, 23, 7.6],
  [441.7, 493.3, 8, 25.2], [647.7, 493.3, 8.2, 25.2], [482.7, 537, 26, 9], [589.3, 537, 26.6, 9],
  [413, 580.7, 9.2, 26.4], [676.7, 580.7, 7.7, 26.4], [470.3, 625.7, 22, 7.7], [538, 625.7, 22.7, 7.7], [605.3, 625.7, 23, 7.7],
  [460.3, 717, 25.7, 7.7], [536.7, 717, 26.6, 7.7], [614, 717, 25.7, 7.7],
];
const panels = [
  'M1870 238H1400.7V252H1395.4V274.5H1400.7V289.6H1870',
  'M1870 300.8H1402V332.4H1395.4V357H1402V389.6H1870',
  'M1870 400.8H1402V427H1395.4V449.4H1402V502H1395.4V524.4H1402V550.6H1870',
  'M1870 564.4H1402V604.4H1397V629.4H1402V712H1397V737.3H1402V778.4H1870',
  'M1870 788.2H1427V844.4H1421.8V867H1427V912H1421.8V934.7H1427V972',
];

const Drawing = () => (
  <Pane $w={1516} $h={840} viewBox="350 130 1516 840">
    <rect x="350" y="130" width="1517" height="840" fill="#dcdcdc" />
    <rect x="775" y="197.5" width="1092" height="761.5" fill="#fff" />
    <path d="M774.4 131V970M350 958.5H774" stroke="#c6c6c6" strokeWidth="1.3" fill="none" />
    <path d="M775 197H1867" stroke="#444" strokeWidth="1.6" />
    <path d="M775 959.2H1867" stroke="#858585" strokeWidth="1.7" />
    <g fill="none" stroke="#161616" strokeWidth="1.3">
      {planks.map(([l, tl, r, tr, t, a, b, bo]) => (
        <path key={t} d={`M${l} ${t}H${r}V${a}H${tr}V${b}H${r}V${bo}H${l}V${b}H${tl}V${a}H${l}Z`} />
      ))}
      {panels.map(d => <path key={d} d={d} />)}
      <path d="M518.3 250.7H582L703.4 594.3V673.2H695.7V698.5H703.4V737.1H397V698.5H404.6V673.2H397V594.3Z" />
      {slots.map(([x, y, w, h]) => <rect key={`${x}-${y}`} x={x} y={y} width={w} height={h} />)}
      <path d="M350 569.5L357 588.3V667H351.4V691.8H357V732.2H350" />
      <path d="M351 667V692" strokeWidth="2.4" />
      <path d="M350 773.4H610.8V838.4H616V863.3H610.8V914.4H616V939.4H610.8V972" />
    </g>
  </Pane>
);

const Bird = ({ c = '#233f7a', d = '#16294f' }) => (
  <g>
    <path d="M19 0L6 7L6.5 24Z" fill={c} /><path d="M0 7L5 6L6 18Z" fill={d} />
  </g>
);
const tabPath = w => `M.7 0V21Q.7 28.3 7 28.3H${w - 12}Q${w - 6} 28.3 ${w - 3} 21L${w + 4} 6Q${w + 7} 0 ${w + 11} 0`;
const bottomTabs = [
  ['Drawing', 70, 'url(#orange)', '#a98a5c', -0.5],
  ['Modeling', 79, 'url(#blue)', '#6f9ad8', -0.4],
  ['Clipart', 59, 'url(#blue)', '#6f9ad8', -0.3],
  ['Layers', 56, 'url(#blue)', '#6f9ad8', -0.5],
];
const menus = [['File', 43, 0], ['Edit', 44, -0.45], ['Model', 63, -0.3], ['Toolpaths', 84, -0.5], ['View', 52, -0.4], ['Help', 40, -0.3]];

const Defs = styled.svg`position: absolute; width: 0; height: 0;`;

export default function App() {
  return (
    <Desktop>
      <Global />
      <Defs>
        <defs>
          <linearGradient id="gold" x2="0" y2="1"><stop stopColor="#fbe58b" /><stop offset="1" stopColor="#f2c53c" /></linearGradient>
          <linearGradient id="page" x2="1" y2="1"><stop stopColor="#fff" /><stop offset="1" stopColor="#cfe4fb" /></linearGradient>
          <linearGradient id="curl" x2="0" y2="1"><stop stopColor="#7697cf" /><stop offset="1" stopColor="#5da2e0" /></linearGradient>
          <linearGradient id="orange" x2="0" y2="1"><stop stopColor="#ffd57e" /><stop offset=".42" stopColor="#fdbe5e" /><stop offset=".45" stopColor="#fba63a" /><stop offset="1" stopColor="#fed0a0" /></linearGradient>
          <linearGradient id="blue" x2="0" y2="1"><stop stopColor="#9cc6ff" /><stop offset=".42" stopColor="#98c0fa" /><stop offset=".45" stopColor="#a3c9fc" /><stop offset="1" stopColor="#c4ddff" /></linearGradient>
          <linearGradient id="doc" x2="0" y2="1"><stop stopColor="#d9e3fa" /><stop offset="1" stopColor="#8aa5e0" /></linearGradient>
          <linearGradient id="cream" x2="0" y2="1"><stop stopColor="#fff4d5" /><stop offset="1" stopColor="#ffdc78" /></linearGradient>
          <linearGradient id="win" x2="1" y2="1"><stop stopColor="#84e0fb" /><stop offset="1" stopColor="#0c9bfb" /></linearGradient>
          <linearGradient id="fold" x2="1" y2="1"><stop stopColor="#ffe07a" /><stop offset="1" stopColor="#fdc12f" /></linearGradient>
        </defs>
      </Defs>

      <TitleBar>
        <AppLogo viewBox="0 -1 19 25"><Bird /></AppLogo>
        <Text $size={15.5} $ls={-0.55} $color="#000">VCarve Pro - ShopBot Edition {'{'}Ministry of Youth and Sports Affair{'}'} - [iftikhar]</Text>
        <Spacer />
        <WindowButtons>
          <svg width="12" height="12"><path d="M0 6H12" stroke="#111" strokeWidth="1.3" /></svg>
          <svg width="12" height="12" fill="none" stroke="#111" strokeWidth="1.2"><rect x=".6" y="2.6" width="8.8" height="8.8" rx="1.5" /><path d="M3 .7H9Q11.4 .7 11.4 3V9" /></svg>
          <svg width="12" height="12"><path d="M.5 .5L11.5 11.5M11.5 .5L.5 11.5" stroke="#111" strokeWidth="1.2" /></svg>
        </WindowButtons>
      </TitleBar>

      <MenuBar>
        {menus.map(([t, w, ls]) => <MenuItem key={t} $w={w} $ls={ls} $size={15}>{t}</MenuItem>)}
        <Spacer />
        <MdiButtons>
          <svg width="9" height="12"><path d="M0 10H9" stroke="#000" strokeWidth="2.4" /></svg>
          <svg width="12" height="12" fill="none" stroke="#000"><rect x="1" y="5" width="7" height="6" strokeWidth="1.4" /><path d="M0 5.2H9M3.5 1.4H12" strokeWidth="2.2" /><path d="M4 1V4M11.3 1V7.5H8" strokeWidth="1.4" /></svg>
          <svg width="11" height="12"><path d="M1 1L10 10.5M10 1L1 10.5" stroke="#000" strokeWidth="3" /></svg>
        </MdiButtons>
      </MenuBar>

      <Body>
        <Side>
          <PanelHeader>
            <Grip />
            <Text $size={15} $ls={-0.35}>Drawing</Text>
            <Spacer />
            <Pin fill="none" stroke="#111"><path d="M2 8V1H7V8M0 8H9" strokeWidth="1.4" /><path d="M6.4 1V8" strokeWidth="2" /><path d="M4.5 8V13" strokeWidth="1.2" /></Pin>
          </PanelHeader>
          <ToolPanel>
            <Section $top={10.5}>
              <Heading $gap={4.5}>File Operations</Heading>
              <Tools rows={[['newFile', 'open', 'save', 'importV', 'importB'], ['job', 'cut', 'copy', 'paste', 'undo', 'redo']]} />
            </Section>
            <Section $top={14}>
              <Heading>2D View Control</Heading>
              <Tools rows={[['pan', 'zoom', 'zoomFit', 'zoomSel', 'tileH', 'tileV', 'dock']]} />
            </Section>
            <LayerRow>
              <LayerIcon viewBox="-39 -39 78 78">
                <g fill="#fff" stroke="#222" strokeWidth="3.5" strokeLinejoin="round">
                  <path d="M-28 24L-8 36L24 12L8 2Z" fill="#eee" /><path d="M-28 14L-8 26L24 2L8 -8Z" /><path d="M-28 4L-8 16L24 -8L8 -18Z" /><path d="M-28 -8L-8 4L24 -22L2 -34Z" />
                </g>
              </LayerIcon>
              <LayerName $size={15} $weight={700} $ls={-0.15}>Layer</LayerName>
              <Select>
                <Text $size={15} $color="#1e2733">0</Text>
                <svg width="12" height="7"><path d="M0 .5H12L6 7Z" fill="#000" /></svg>
              </Select>
            </LayerRow>
            <Section $top={15}>
              <Heading>Create Vectors</Heading>
              <Tools rows={[['circle', 'ellipse', 'rect', 'poly', 'star'], ['polyline', 'arc', 'curve', 'texture'], ['text', 'textBox', 'textEdit', 'textNode', 'textArc'], ['bird', 'measure']]} />
            </Section>
            <Section $top={13.5}>
              <Heading>Transform Objects</Heading>
              <Tools rows={[['move', 'size', 'rotate', 'mirror', 'distort', 'align']]} />
            </Section>
            <Section $top={13.5}>
              <Heading>Edit Objects</Heading>
              <Tools rows={[['select', 'nodeEdit', 'transform', 'group', 'ungroup', 'measureEdit'], ['weld', 'subtract', 'overlap', 'slice', 'trim'], ['fillet', 'extend', 'smooth', 'closeV'], ['joinA', '', '', 'nodesR']]} />
            </Section>
            <Section $top={13.5}>
              <Heading>Offset and Layout</Heading>
              <Tools rows={[['offset', 'array', 'radial', 'along', 'nest', 'nesting']]} />
            </Section>
            <JobInfo>
              <JobLine $ls={0.72}>Job Dimensions</JobLine>
              <JobLine $in $ls={0.42}><JobKey>Width</JobKey>[X]: 2400.0 mm</JobLine>
              <JobLine $in $ls={0.42}><JobKey>Height</JobKey>[Y]: 1200.0 mm</JobLine>
              <JobLine $in $ls={0.42}><JobKey>Depth</JobKey>[Z]: 12.0 mm</JobLine>
            </JobInfo>
          </ToolPanel>
          <BottomTabs>
            {bottomTabs.map(([t, w, f, s, ls], i) => (
              <BottomTab key={t} $w={w} $z={9 - i}>
                <TabShape><path d={tabPath(w)} fill={f} stroke={s} strokeWidth="1.6" /></TabShape>
                <Text $size={15} $ls={ls}>{t}</Text>
              </BottomTab>
            ))}
          </BottomTabs>
        </Side>

        <Docs>
          <DocTabs>
            <DocTab $w={96} $pl={31}>
              <TabShape><path d="M0 24L18 4Q22 .7 28 .7H92Q95 .7 95 4V25H0Z" fill="url(#doc)" /><path d="M0 24L18 4Q22 .7 28 .7H92Q95 .7 95 4V24" fill="none" stroke="#8b8b8b" strokeWidth="1.1" /></TabShape>
              <Text $size={15} $weight={700} $ls={-0.5} $color="#000">iftikhar</Text>
            </DocTab>
            <DocTab $w={77} $pl={11}>
              <TabShape><path d="M0 24V5Q4 .7 8 .7H74Q77 .7 77 4V24Z" fill="url(#cream)" stroke="#9b9b9b" strokeWidth="1.1" /></TabShape>
              <Text $size={15} $ls={-0.4}>3D View</Text>
            </DocTab>
          </DocTabs>
          <Frame>
            <svg width="33" height="33" viewBox="315 96 33 33"><path d="M330.5 98V125" stroke="#111" strokeWidth="1.3" strokeDasharray="4 3.5" /><path d="M321 114.5H325M328.5 114.5H332.5M336 114.5H340" stroke="#111" strokeWidth="1.4" /><circle cx="330.5" cy="114.5" r="1.5" /></svg>
            <TopRuler />
            <SideRuler />
            <CanvasWrap>
              <Drawing />
              <ScrollY />
              <ScrollX />
            </CanvasWrap>
          </Frame>
        </Docs>

        <RightDock>
          <DockTab><DockLabel $size={15} $ls={0.35}>Toolpaths</DockLabel></DockTab>
        </RightDock>
      </Body>

      <StatusBar>
        <StatusReady $size={15} $ls={-0.5}>Ready</StatusReady>
        <Coords><Text $size={15} $ls={-0.7}>X:-62.6718 Y:1298.0663</Text></Coords>
      </StatusBar>

      <Taskbar>
        <Apps>
          <AppButton><AppIcon viewBox="0 0 32 32"><g fill="url(#win)" transform="translate(1.5 -4)"><path d="M0 2Q0 0 2 0H13.7V13.7H0Z" /><path d="M15 0H27Q29 0 29 2V13.7H15Z" /><path d="M0 15H13.7V29H2Q0 29 0 27Z" /><path d="M15 15H29V27Q29 29 27 29H15Z" /></g></AppIcon><Running $w={0} /></AppButton>
          <AppButton><AppIcon viewBox="0 0 32 32"><circle cx="18" cy="8.5" r="10.8" fill="#45527a" stroke="#f2f2f2" strokeWidth="2.5" /><path d="M10 16.5L4.5 22.2" stroke="#dcdcdc" strokeWidth="3" strokeLinecap="round" /></AppIcon><Running $w={0} /></AppButton>
          <AppButton><AppIcon viewBox="0 0 32 32"><rect x="1.3" y="4.3" width="22.4" height="20" rx="1" fill="#6a6a6a" /><rect x="9" y="-3.7" width="22.4" height="20" rx="1" fill="#f2f2f2" /><rect x="9" y="4.3" width="14.7" height="12" fill="#b4b4b4" /></AppIcon><Running $w={0} /></AppButton>
          <AppButton><AppIcon viewBox="0 0 32 32"><path d="M1 -1.5Q1 -3 2.5 -3H11L13.5 0H20V6H1Z" fill="#e0a006" /><path d="M1 3H10L13 -.5H31V23.3H1Z" fill="url(#fold)" /><path d="M6.5 23.3V17.5Q6.5 14.8 9.2 14.8H22.5Q25 14.8 25 17.5V23.3Z" fill="#1183d4" /><path d="M10.5 19H21" stroke="#0b5ea8" /></AppIcon><Running $w={0} /></AppButton>
          <AppButton><AppIcon viewBox="0 0 32 32"><circle cx="16" cy="10" r="14.5" fill="#1fd65f" /><g fill="none" stroke="#04170a" strokeLinecap="round"><path d="M7.5 5.5Q17 2.8 25.5 7" strokeWidth="2.8" /><path d="M8.5 10.5Q16.5 8.3 23.8 12" strokeWidth="2.3" /><path d="M9.2 15Q16 13.2 22 16.3" strokeWidth="1.9" /></g></AppIcon><Running $w={8} $c="#969db0" /></AppButton>
          <AppButton><AppIcon viewBox="0 0 32 32"><g transform="translate(16 10)"><path d="M0 0L-11.8 -6.8A13.6 13.6 0 0 1 11.8 -6.8Z" fill="#e33b2e" /><path d="M0 0L11.8 -6.8A13.6 13.6 0 0 1 0 13.6Z" fill="#fcc31e" /><path d="M0 0L0 13.6A13.6 13.6 0 0 1 -11.8 -6.8Z" fill="#23a552" /><path d="M0 -6.4H12L5 3Z" fill="#fcc31e" /><path d="M-11.8 -6.8L-5.4 3.4L0 -6.4Z" fill="#e33b2e" /><path d="M0 13.6L5.6 3.2L-4 5Z" fill="#23a552" /><circle r="6.5" fill="#fff" /><circle r="5.1" fill="#2b7de9" /></g></AppIcon><Running $w={8} $c="#969db0" /></AppButton>
          <AppButton $active><AppIcon viewBox="0 0 32 32"><g transform="translate(6 -2)"><Bird c="#1f478f" d="#163163" /></g></AppIcon><Running $w={20} $c="#4cc2ff" /></AppButton>
        </Apps>
        <Tray>
          <TrayIcon $w={16} $mr={13} viewBox="0 0 16 24"><path d="M0 16L8 8L16 16" fill="none" stroke="#fff" strokeWidth="1.4" /></TrayIcon>
          <TrayIcon $w={20} $mr={17} viewBox="0 0 20 24"><g fill="none" stroke="#fff" strokeWidth="1.4"><path d="M.8 12A9 9 0 0 1 17.5 7M18 2V7.5H13M1 21.5V16H6.5M1.5 17Q4 20 7 21.5" /></g><circle cx="14.5" cy="17" r="5" fill="#ff9500" /></TrayIcon>
          <Lang $size={15} $ls={-0.6} $color="#fff">ENG</Lang>
          <TrayIcon $w={20} $mr={9} viewBox="0 0 20 24"><g fill="none" stroke="#fff" strokeWidth="1.6"><path d="M.7 9.5Q10 .5 19.3 9.5M3.5 12.5Q10 6 16.5 12.5M6.2 15.3Q10 11.5 13.8 15.3" /></g><circle cx="10" cy="17" r="1.8" fill="#fff" /></TrayIcon>
          <TrayIcon $w={20} $mr={11} viewBox="0 0 20 24"><g fill="none" stroke="#fff" strokeWidth="1.5"><path d="M1 9.5H4L9 5V19L4 14.5H1Z" /><path d="M11.5 9Q13.5 12 11.5 15M14 7Q17.5 12 14 17" /><path d="M16.5 5Q21.5 12 16.5 19" opacity=".4" /></g></TrayIcon>
          <TrayIcon $w={20} $mr={6} viewBox="0 0 20 24"><rect x=".8" y="6" width="15.5" height="12" rx="3" fill="none" stroke="#fff" strokeWidth="1.6" /><rect x="3" y="8.3" width="5" height="7.5" rx="1" fill="#fff" /><path d="M18.3 9.5V14.5" stroke="#fff" strokeWidth="2" /></TrayIcon>
          <Clock>
            <Text $size={15} $ls={-0.65} $color="#fff">12:21 PM</Text>
            <Text $size={15} $ls={-0.65} $color="#fff">4/21/2022</Text>
          </Clock>
          <Badge><Text $size={13} $color="#10224c">3</Text></Badge>
        </Tray>
      </Taskbar>
    </Desktop>
  );
}
